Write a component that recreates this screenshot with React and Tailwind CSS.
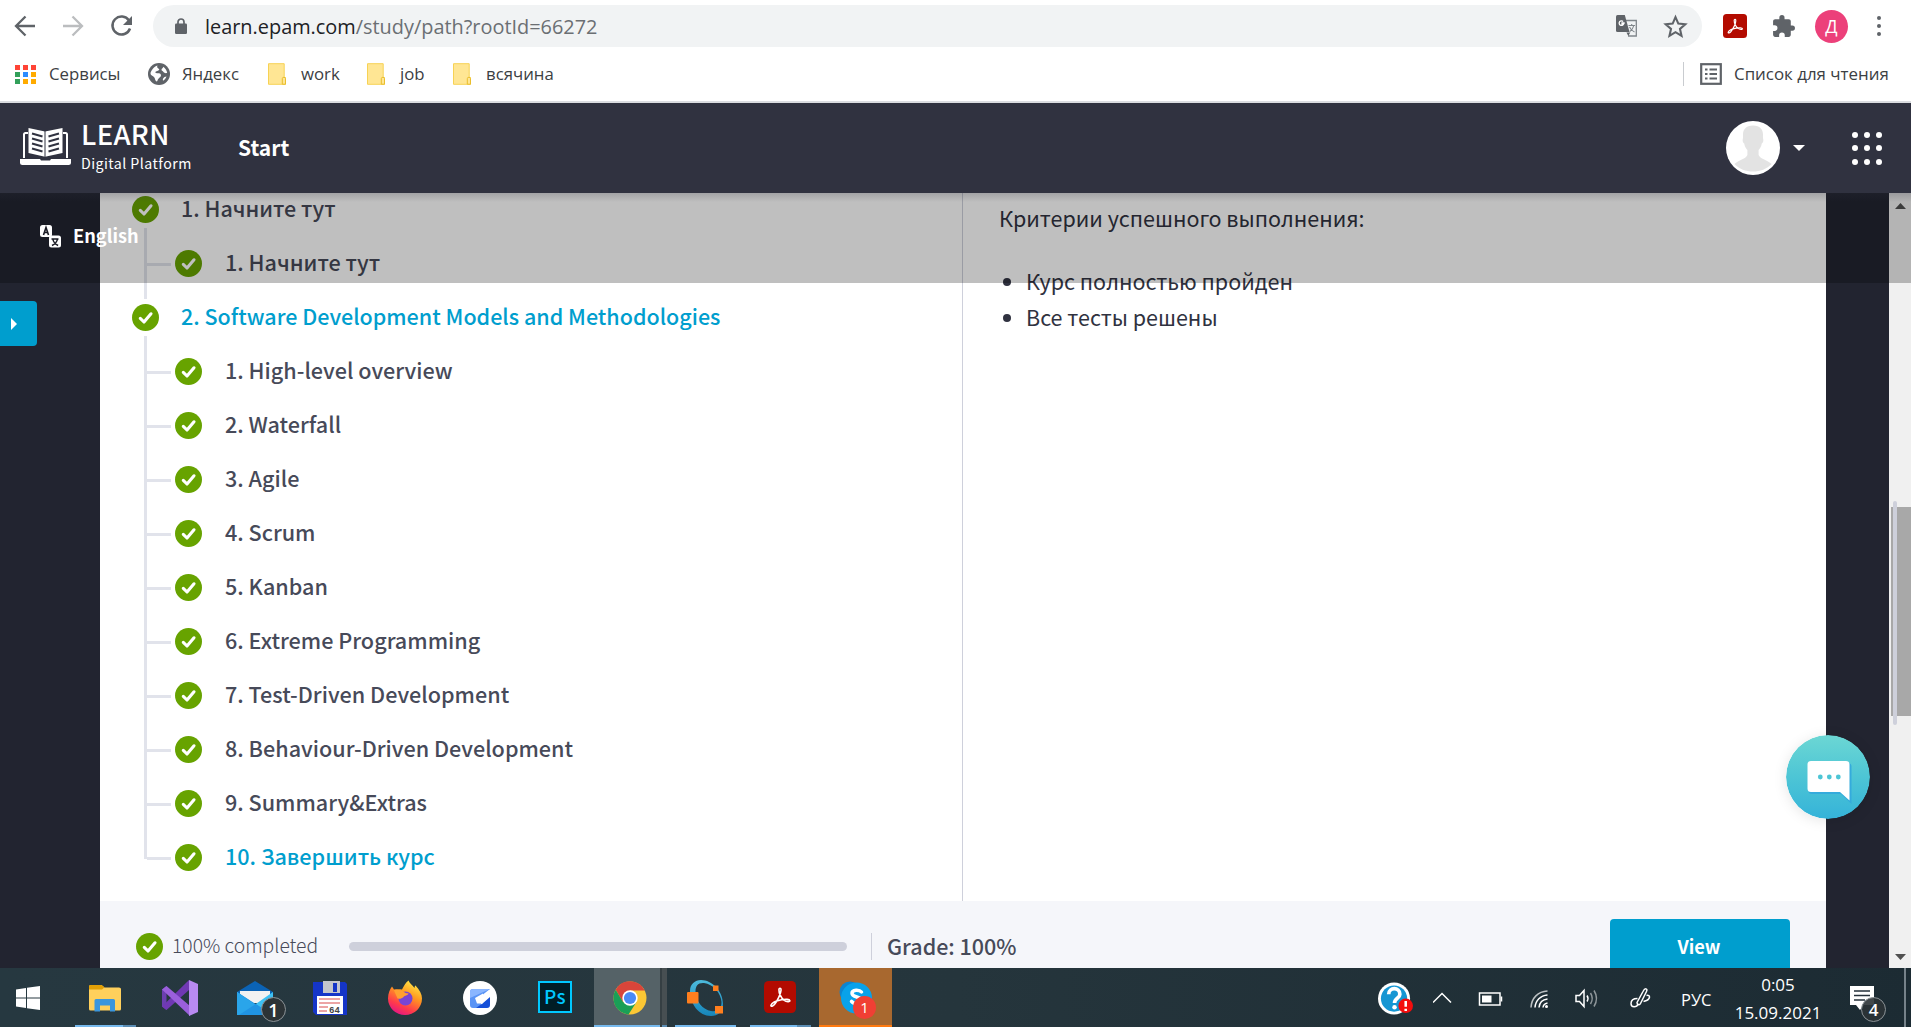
import React from 'react';

const CJK = "font-['Noto_Sans_CJK_SC',sans-serif]";
const OPEN = "font-['Open_Sans','Noto_Sans',sans-serif]";

function Check() {
  return (
    <svg viewBox="0 0 27 27" className="block h-[27px] w-[27px] shrink-0">
      <circle cx="13.5" cy="13.5" r="13.5" fill="#67a300" />
      <path d="M8.3 14.4l3.7 3.600 7-8.200" fill="none" stroke="#fff" strokeWidth="3.1" strokeLinecap="round" strokeLinejoin="round" />
    </svg>
  );
}

function Folder() {
  return (
    <svg viewBox="0 0 18 22" className="block h-[22px] w-[18px]">
      <path d="M.5.7h15.700v13.800h1.300v6.800H.5z" fill="#ffe694" stroke="#f7d254" />
      <path d="M14.300 21.200v-5.600q0-1.300 1.600-1.300t1.600 1.300v5.600z" fill="#ffe694" stroke="#e9bd2c" />
    </svg>
  );
}

function AcrobatMark({ className }) {
  return (
    <svg viewBox="0 0 24 24" className={className}>
      <rect width="24" height="24" rx="3.5" fill="#b30b00" />
      <path d="M5.200 18.200c.8-2 4.700-3.500 8-4.100 3-.6 6-.5 6.200.6.2 1.100-2.400 1-4.500-.4-2-1.400-3.800-5.300-3.700-7.700.1-1.700 1.700-1.500 1.600.2-.1 2.800-3 8.200-4.700 10.500-1.200 1.700-3.200 2.300-2.900.9z" fill="none" stroke="#fff" strokeWidth="1.200" strokeLinejoin="round" />
    </svg>
  );
}

function Toolbar() {
  return (
    <div className="flex h-[52px] items-center">
      <svg viewBox="0 0 153 52" className="block h-[52px] w-[153px] shrink-0" fill="none" strokeWidth="2.3">
        <path d="M35 26H17M25.500 16.500L16 26l9.500 9.500" stroke="#5f6368" />
        <path d="M63 26h18M72.500 16.500L82 26l-9.500 9.500" stroke="#bbbdbf" />
        <path d="M129 20.500A9 9 0 1 0 130 28.500" stroke="#5f6368" strokeWidth="2.500" />
        <path d="M132 16v9h-9z" fill="#5f6368" />
      </svg>
      <div className="flex h-[42px] w-[1549px] items-center rounded-full bg-[#f1f3f4] pl-[22px] pr-[14px]">
        <svg viewBox="0 0 12 16" className="h-[16px] w-[12px]">
          <rect y="5.500" width="12" height="10.500" rx="1.200" fill="#5f6368" />
          <path d="M3 6V4a3 3 0 0 1 6 0v2" fill="none" stroke="#5f6368" strokeWidth="1.700" />
        </svg>
        <div className="ml-[18px] mt-[2px] flex-1 whitespace-nowrap text-[19.900px] leading-none text-[#6b6f73]">
          <span className="text-[#202124]">learn.epam.com</span>/study/path?rootId=66272
        </div>
        <svg viewBox="0 0 22 22" className="h-[22px] w-[22px]">
          <path d="M9 5.500h11.300v15.500H12" fill="none" stroke="#80868b" strokeWidth="1.300" />
          <path d="M1.500 0h7.300l4.700 17H1.500Q0 17 0 15.500v-14Q0 0 1.500 0z" fill="#5f6368" />
          <path d="M10.500 17.500l1.800 3.500 2-3.500z" fill="#5f6368" />
          <path d="M8.700 8H6v1h1.600a2.300 2.300 0 1 1-.5-2.500" fill="none" stroke="#fff" strokeWidth="1.300" />
          <path d="M12.500 10.500h6.500M15.700 9v1.500M17.800 10.500c-.6 2.700-2 4.600-4 6M13.500 12c1 2 2.800 4 5 5" fill="none" stroke="#80868b" strokeWidth="1.100" />
        </svg>
        <svg viewBox="0 0 24 24" className="ml-[25px] h-[25px] w-[25px]">
          <path d="M12 3l2.700 6.200 6.700.6-5.100 4.500 1.500 6.600L12 17.400l-5.800 3.500 1.500-6.600-5.100-4.500 6.700-.6z" fill="none" stroke="#5f6368" strokeWidth="2" />
        </svg>
      </div>
      <AcrobatMark className="ml-[21px] h-[24px] w-[24px]" />
      <svg viewBox="0 0 24 24" className="ml-[24px] h-[25px] w-[25px]">
        <path fill="#5f6368" d="M20.500 11H19V7c0-1.100-.9-2-2-2h-4V3.500a2.500 2.500 0 0 0-5 0V5H4c-1.100 0-2 .9-2 2v3.800h1.500a2.700 2.700 0 0 1 0 5.400H2V20c0 1.100.9 2 2 2h3.800v-1.500a2.700 2.700 0 0 1 5.400 0V22H17c1.100 0 2-.9 2-2v-4h1.500a2.500 2.500 0 0 0 0-5z" />
      </svg>
      <div className="ml-[19px] flex h-[33px] w-[33px] items-center justify-center rounded-full bg-[#ec407a] text-[18px] leading-none text-white">Д</div>
      <div className="ml-[29px] flex flex-col gap-[4px]">
        {[0, 1, 2].map((i) => <i key={i} className="block h-[4px] w-[4px] rounded-full bg-[#5f6368]" />)}
      </div>
    </div>
  );
}

function Bookmarks() {
  const colors = ['bg-[#ff4436]', 'bg-[#ff4436]', 'bg-[#ff4436]', 'bg-[#32a05a]', 'bg-[#2b8cff]', 'bg-[#ffab00]', 'bg-[#32a05a]', 'bg-[#ffab00]', 'bg-[#ffab00]'];
  return (
    <div className="flex h-[49px] items-center whitespace-nowrap pb-[5px] pl-[15px] text-[16.800px] leading-none text-[#3c4043]">
      <div className="grid grid-cols-3 gap-x-[3px] gap-y-[2px]">
        {colors.map((c, i) => <i key={i} className={`block h-[5px] w-[5px] ${c}`} />)}
      </div>
      <span className="ml-[13px] w-[72px]">Сервисы</span>
      <svg viewBox="0 0 22 22" className="ml-[27px] h-[22px] w-[22px]">
        <circle cx="11" cy="11" r="11" fill="#5f6368" />
        <path d="M9.500 2.500c-1 2 .5 2.500 1.500 3.500s-1.500 2-3 2.500c-1.500.6-.5 1.800 1 1.800 2.500 0 4 .2 4 2s-2 2.500-3 4c-.6 1-.4 2.200-1.500 2.200-1.800-1-1-2.500-2.300-4.200S2.500 12.500 2.500 10.500 6 3 9.500 2.500zM15 3.800c2 1.200 3.800 3.500 4.200 6-1.200.7-3 .3-3.700-.8s-2.300-1.200-2-2.500S15.300 5.500 15 3.800zM18.500 13.500c-.6 1.600-2 3.400-3.500 4.200-.6-1.500.5-3 1.500-3.700z" fill="#fff" />
      </svg>
      <span className="ml-[12px] w-[60px]">Яндекс</span>
      <span className="ml-[26px]"><Folder /></span>
      <span className="ml-[15px] w-[40px]">work</span>
      <span className="ml-[26px]"><Folder /></span>
      <span className="ml-[15px] w-[26px]">job</span>
      <span className="ml-[27px]"><Folder /></span>
      <span className="ml-[15px]">всячина</span>
      <div className="ml-auto mr-[16px] h-[24px] w-px bg-[#c9ccd0]" />
      <svg viewBox="0 0 22 22" className="h-[22px] w-[22px]" fill="none" stroke="#5f6368">
        <rect x="1.200" y="1.200" width="19.600" height="19.600" strokeWidth="2.200" />
        <path d="M5 6.500h2.500M5 11h2.500M5 15.500h2.500M9.500 6.500H17M9.500 11H17M9.500 15.500H17" strokeWidth="2" />
      </svg>
      <span className="ml-[12px] mr-[22px] w-[155px] text-[16.900px]">Список для чтения</span>
    </div>
  );
}

function Header() {
  return (
    <div className={`flex h-[90px] items-center bg-[#303240] text-white ${CJK}`}>
      <svg viewBox="0 0 51 38" className="mb-[4px] ml-[20px] h-[38px] w-[51px]">
        <path d="M4 31V7.500q0-1.500 1.500-1.500H8M47 31V7.500Q47 6 45.500 6H43" fill="none" stroke="#fff" strokeWidth="2" />
        <path d="M0 32h20l1 1.500h9l1-1.500h20v3.500Q51 38 48.500 38h-46Q0 38 0 35.500z" fill="#fff" />
        <path d="M8.500 1L25 4.500 42.500 1v25L25 29.800 8.500 26z" fill="#fff" />
        <path d="M25 4v26" stroke="#303240" strokeWidth="1" />
        <path d="M12 6.500l10.500 3M12 11.500l10.500 3M12 16.500l10.500 3M12 21.500l10.500 3M39 6.500l-10.500 3M39 11.500l-10.500 3M39 16.500l-10.500 3M39 21.500l-10.500 3" stroke="#303240" strokeWidth="2" />
      </svg>
      <div className="mb-[5px] ml-[10px] flex w-[157px] flex-col whitespace-nowrap">
        <span className="h-[34px] text-[27.500px] font-medium leading-[29px] tracking-[0.3px]">LEARN</span>
        <span className="text-[14.200px] leading-[20px] tracking-[0.450px]">Digital Platform</span>
      </div>
      <span className="mb-[2px] text-[21px] font-bold leading-none">Start</span>
      <svg viewBox="0 0 54 54" className="ml-auto h-[54px] w-[54px]">
        <circle cx="27" cy="27" r="27" fill="#fff" />
        <path d="M27 4.500c7 0 10 4 10 9 0 2-.2 3.500.3 5 .3 2-.6 3.500-1.500 4-.5 3-1.700 4.800-3.200 6.500v5c1.500 4 8 4.500 12.900 9C41 48 34 50.500 27 50.500S13 48 8.500 43c5-4.500 11.400-5 12.900-9v-5c-1.500-1.700-2.700-3.500-3.200-6.500-.9-.5-1.800-2-1.500-4 .5-1.500.3-3 .3-5 0-5 3-9 10-9z" fill="#e3e3e3" />
      </svg>
      <svg viewBox="0 0 12 6" className="ml-[13px] h-[6px] w-[12px]"><path d="M0 0h12L6 6z" fill="#fff" /></svg>
      <div className="ml-[47px] mr-[29px] grid grid-cols-3 gap-x-[6px] gap-y-[7.500px]">
        {[...Array(9).keys()].map((i) => <i key={i} className="block h-[6px] w-[6px] rounded-full bg-white" />)}
      </div>
    </div>
  );
}

const modules = ['1. High-level overview', '2. Waterfall', '3. Agile', '4. Scrum', '5. Kanban', '6. Extreme Programming', '7. Test-Driven Development', '8. Behaviour-Driven Development', '9. Summary&Extras', '10. Завершить курс'];

function Section({ title, active }) {
  return (
    <div className={`flex h-[54px] items-center pl-[32px] ${active ? 'text-[#009ece]' : ''}`}>
      <Check />
      <span className="ml-[22px] mt-[-3px]">{title}</span>
    </div>
  );
}

function Module({ title, active, first, line }) {
  return (
    <div className={`flex h-[54px] items-center pl-[44px] text-[21.600px] ${active ? 'text-[#009ece]' : ''}`}>
      <div className={`flex w-[3px] flex-col self-stretch ${first ? 'mt-[-8px]' : ''} ${line === 'down' ? 'mb-[-9px]' : ''}`}>
        <div className={`w-[3px] bg-[#e1e3eb] ${line === 'end' ? 'h-[29px]' : 'grow'}`} />
      </div>
      <div className="mt-[2px] h-[3px] w-[24px] bg-[#e1e3eb]" />
      <div className="ml-[4px]"><Check /></div>
      <span className="ml-[23px] mt-[-3px]">{title}</span>
    </div>
  );
}

function Course() {
  return (
    <div className={`flex w-[1726px] flex-col bg-white text-[#474a59] ${CJK}`}>
      <div className="flex h-[708px]">
        <div className="w-[862px] overflow-hidden whitespace-nowrap text-[21.500px] font-medium leading-[32px]">
          <div className="mt-[-11px] flex flex-col">
            <Section title="1. Начните тут" />
            <Module title="1. Начните тут" first line="down" />
            <Section title="2. Software Development Models and Methodologies" active />
            {modules.map((m, i) => (
              <Module key={m} title={m} first={i === 0} line={i === 9 ? 'end' : 'through'} active={i === 9} />
            ))}
          </div>
        </div>
        <div className="w-px bg-[#ced0db]" />
        <div className="flex flex-col whitespace-nowrap pl-[36px] pt-[7px] text-[21.500px] leading-[36px] text-[#303240]">
          <p>Критерии успешного выполнения:</p>
          <ul className="mt-[27px] flex flex-col">
            {['Курс полностью пройден', 'Все тесты решены'].map((t) => (
              <li key={t} className="flex items-center">
                <i className="ml-[4px] mr-[15px] mt-[2px] block h-[8px] w-[8px] rounded-full bg-[#303240]" />
                {t}
              </li>
            ))}
          </ul>
        </div>
      </div>
      <div className="flex h-[67px] items-start bg-[#f5f6fa] pl-[36px] leading-[27px]">
        <div className="mt-[32px] flex items-center whitespace-nowrap">
          <Check />
          <span className="ml-[9px] mt-[-2px] w-[148px] text-[19.300px] font-light">100% completed</span>
          <div className="ml-[29px] h-[9px] w-[498px] rounded-full bg-[#ced0db]" />
          <div className="ml-[24px] h-[27px] w-px bg-[#ced0db]" />
          <span className="ml-[15px] mt-[-2px] text-[21.500px] font-medium">Grade: 100%</span>
        </div>
        <div className="ml-auto mr-[36px] mt-[18px] flex h-[49px] w-[180px] items-center justify-center rounded-t-[4px] bg-[#009ece] pr-[2px] pt-[6px] text-[18.200px] font-bold text-white">View</div>
      </div>
    </div>
  );
}

function Scrollbar() {
  return (
    <div className="relative flex w-[22px] flex-col items-center bg-[#f0f0f0]">
      <svg viewBox="0 0 11 6" className="mt-[10px] h-[6px] w-[11px]"><path d="M0 6h11L5.500 0z" fill="#505050" /></svg>
      <div className="mt-[298px] h-[209px] w-[20px] self-end bg-[#a8a8a8]" />
      <div className="absolute left-[4px] top-[308px] h-[224px] w-[4px] rounded-full bg-[#ced0db]" />
      <svg viewBox="0 0 11 6" className="mb-[8px] mt-auto h-[6px] w-[11px]"><path d="M0 0h11L5.500 6z" fill="#505050" /></svg>
    </div>
  );
}

function Page() {
  return (
    <div className="relative flex h-[775px] bg-[#222430]">
      <div className="w-[100px]" />
      <Course />
      <div className="w-[63px]" />
      <Scrollbar />
      <div className={`absolute left-0 top-0 flex h-[90px] w-[1911px] items-center bg-black/25 text-white ${CJK}`}>
        <svg viewBox="0 0 21 23" className="mb-[3px] ml-[40px] h-[23px] w-[21px]">
          <rect width="12" height="12" rx="2.500" fill="#fff" />
          <path d="M3.500 10L6 2.500 8.500 10M4.300 7.500h3.400" fill="none" stroke="#1a1b24" strokeWidth="1.600" />
          <rect x="9" y="10.500" width="12" height="12" rx="2.500" fill="#fff" />
          <path d="M11.500 14h7M17.500 14c-.5 3-2.500 5-5.500 6.500M12.800 14c.5 3 2.300 5 5.300 6.500" fill="none" stroke="#1a1b24" strokeWidth="1.500" />
        </svg>
        <span className="ml-[12px] mt-[-4px] text-[18.200px] font-bold">English</span>
      </div>
      <div className="absolute left-0 top-0 h-[9px] w-[1911px] bg-gradient-to-b from-[#303240]/20 to-transparent" />
      <div className="absolute left-0 top-[108px] flex h-[45px] w-[37px] items-center rounded-r-[4px] bg-[#009ece] pl-[11px]">
        <svg viewBox="0 0 6 12" className="h-[12px] w-[6px]"><path d="M0 0v12l6-6z" fill="#fff" /></svg>
      </div>
      <svg viewBox="0 0 84 84" className="absolute left-[1786px] top-[542px] h-[84px] w-[84px] rounded-full shadow-[0_2px_14px_rgba(0,0,0,0.1)]">
        <defs>
          <linearGradient id="chat" x2="0" y2="1"><stop stopColor="#6cd7d4" /><stop offset=".5" stopColor="#4dc5d5" /><stop offset="1" stopColor="#35b3d9" /></linearGradient>
        </defs>
        <circle cx="42" cy="42" r="42" fill="url(#chat)" />
        <path d="M26 28h36q3.500 0 3.500 3.500v37.500L55 59H26q-3.500 0-3.500-3.500v-24Q22.500 28 26 28z" fill="#35abdc" />
        <path d="M25 26h35q3.500 0 3.500 3.500V65.500L54 57H25q-3.500 0-3.500-3.500v-24Q21.500 26 25 26z" fill="#fff" />
        <g fill="#4dc5d5"><circle cx="34.300" cy="42" r="2.400" /><circle cx="43.300" cy="42" r="2.400" /><circle cx="52.300" cy="42" r="2.400" /></g>
      </svg>
    </div>
  );
}

function Slot({ children, className }) {
  return <div className={`flex shrink-0 flex-col items-center ${className}`}>{children}</div>;
}

function Underline({ main, rest }) {
  return (
    <div className="mt-auto flex h-[2px]">
      <i className={`block bg-[#76b9ed] ${main}`} />
      <i className={`block bg-[#5b8db4] ${rest}`} />
    </div>
  );
}

function Taskbar() {
  return (
    <div className="flex h-[59px] bg-gradient-to-r from-[#263840] via-[#25353c] to-[#1c2b33] text-white">
      <Slot className="w-[56px]">
        <svg viewBox="0 0 24 24" className="mt-[18px] h-[24px] w-[24px]"><path d="M0 3.400L10 2v9.500H0zM11 1.800L24 0v11.500H11zM0 12.500h10V22L0 20.600zM11 12.500h13V24l-13-1.800z" fill="#fff" /></svg>
      </Slot>
      <Slot className="ml-[18px] w-[62px]">
        <svg viewBox="0 0 32 27" className="mt-[17px] h-[27px] w-[32px]">
          <path d="M0 1.500Q0 0 1.500 0h11l3 2.500H30Q32 2.500 32 4v20q0 1.500-1.500 1.500h-29Q0 25.500 0 24z" fill="#ffd05c" />
          <path d="M0 1.500Q0 0 1.500 0h11l3 2.300L13 4.500H0z" fill="#e2a006" />
          <path d="M5.500 26.500v-11q0-1.500 1.500-1.500h17.500q1.500 0 1.500 1.500v11h-5v-6H11v6z" fill="#3b96dc" />
        </svg>
        <Underline main="w-[48px]" rest="w-[13px]" />
      </Slot>
      <Slot className="ml-[14px] w-[60px]">
        <svg viewBox="0 0 36 36" className="mt-[12px] h-[36px] w-[36px]">
          <path d="M0 9.500L4.500 6v24L0 26.500z" fill="#6b3fb0" />
          <path d="M0 26.500L27 0v10L4.500 30z" fill="#7038b4" />
          <path d="M0 9.500L4.500 6 28 26v10L0 9.500z" fill="#9a5fdc" />
          <path d="M27 0l9 4v28l-9 4z" fill="#b98af2" />
        </svg>
      </Slot>
      <Slot className="relative ml-[15px] w-[60px]">
        <svg viewBox="0 0 36 34" className="mt-[13px] h-[34px] w-[36px]">
          <path d="M0 11L18 0l18 11v3H0z" fill="#0b63b5" />
          <path d="M3 10h30v12H3z" fill="#f2f2f2" />
          <path d="M0 11l18 12.500L36 11v23H0z" fill="#3cc0f3" />
          <path d="M0 11l36 23H0z" fill="#2094e3" />
          <path d="M0 11l18 12.500L2 34H0z" fill="#2aa5ea" />
        </svg>
        <span className={`absolute left-[36px] top-[29px] flex h-[25px] w-[25px] items-center justify-center rounded-full border border-[#8b9296] bg-[#2c3336] text-[18px] font-semibold leading-none ${OPEN}`}>1</span>
      </Slot>
      <Slot className="ml-[15px] w-[60px]">
        <svg viewBox="0 0 34 34" className="mt-[13px] h-[34px] w-[34px]">
          <path d="M1 1h31l2 2v31H3l-3-3V1z" fill="#1535c8" />
          <rect x="10" y="0" width="17" height="12" fill="#c4c6cc" /><rect x="20" y="2" width="4" height="9" fill="#1535c8" />
          <rect x="4" y="15" width="26" height="18" fill="#fff" />
          <path d="M6 18h21M6 22h21M6 26h9M6 30h8" stroke="#d94b4b" strokeWidth="1" />
          <text x="16" y="31.500" fontSize="9" fontWeight="700" fill="#444" fontFamily="Liberation Mono">64</text>
        </svg>
      </Slot>
      <Slot className="ml-[14px] w-[62px]">
        <svg viewBox="0 0 34 34" className="mt-[12px] h-[35px] w-[34px]">
          <defs><linearGradient id="fox" x1=".8" y1="0" x2=".3" y2="1"><stop stopColor="#fff04a" /><stop offset=".4" stopColor="#ff9a1f" /><stop offset=".75" stopColor="#ff3b4a" /><stop offset="1" stopColor="#e31587" /></linearGradient></defs>
          <path d="M20.500 0c1 3 4 4.500 6 7.500 0-2 1-2.500 1-2.500 4 4.500 6.500 8.500 6.500 13A17 16.500 0 0 1 0 18C0 12.500 2 8.500 4 6l2 3c3-.5 6-.5 8 0 2-3.500 3-6.500 6.500-9z" fill="url(#fox)" />
          <circle cx="17.500" cy="18" r="7" fill="#7745d3" />
          <path d="M6 9.500c4-.5 8 0 10 2 1.500 1.500 3 1 4.500 1.500-.5 2-4 2-5 3.500-2 2.500-6 1.500-6 1.500-1-3-2.500-5-3.500-8.500z" fill="#ffa030" />
        </svg>
      </Slot>
      <Slot className="ml-[13px] w-[62px]">
        <svg viewBox="0 0 34 34" className="mt-[13px] h-[34px] w-[34px]">
          <circle cx="17" cy="17" r="17" fill="#fff" />
          <path d="M7 11q0-3 3-3h17l-9 7v12h-8q-3 0-3-3z" fill="#5a94f5" />
          <path d="M27 8L7 17V11q0-3 3-3z" fill="#8ab6ff" />
          <path d="M27 16v8q0 3-3 3H13l7-5v-6z" fill="#1650d8" />
          <path d="M12 17l8-4.500V16h7l-7.500 6.500H14z" fill="#fff" />
        </svg>
      </Slot>
      <Slot className="ml-[13px] w-[62px]">
        <div className={`mt-[13px] flex h-[32px] w-[34px] items-center justify-center border-2 border-[#00c8ff] bg-[#001d26] pb-[3px] text-[19px] font-medium leading-none tracking-[0.5px] text-[#00c8ff] ${CJK}`}>Ps</div>
      </Slot>
      <div className="ml-[8px] flex w-[73px] bg-[#556267]">
        <div className="flex w-[66px] flex-col items-center">
          <svg viewBox="0 0 34 34" className="ml-[6px] mt-[13px] h-[34px] w-[34px]">
            <circle cx="17" cy="17" r="16.500" fill="#fbc734" />
            <path d="M2.700 8.700A16.500 16.500 0 0 1 31.800 9.500H17L10 21z" fill="#d9453a" />
            <path d="M2.700 8.700A16.500 16.500 0 0 0 15.500 33.500L23.500 21 17 24 10 21z" fill="#1a9f57" />
            <circle cx="17" cy="17" r="7.700" fill="#fff" /><circle cx="17" cy="17" r="6.100" fill="#4a8af5" />
          </svg>
          <i className="mt-auto block h-[2px] w-[66px] bg-[#76b9ed]" />
        </div>
        <div className="flex w-[7px] border-l-2 border-[#353f43] bg-[#474f52]"><i className="mt-auto block h-[2px] w-full bg-[#5b8db4]" /></div>
      </div>
      <Slot className="ml-[7px] w-[62px]">
        <svg viewBox="0 0 36 36" className="mt-[12px] h-[36px] w-[36px]">
          <defs><linearGradient id="ring" x2="0" y2="1"><stop stopColor="#4dbbdc" /><stop offset="1" stopColor="#1685ba" /></linearGradient></defs>
          <path fillRule="evenodd" d="M14 0C25 0 36 11 36 24 36 32 31 36 24 36 12 36 3 24 3 11 3 4 8 0 14 0zM17 3C11 2.500 8.500 6 8.500 11.500 8.500 21 16 30 24 31 31 32 34.500 29 34.500 22 34 13 26 4 17 3z" fill="url(#ring)" />
          <g fill="#ff7f1e"><rect y="12" width="11.500" height="11.500" rx="1" /><rect x="26" y="5.500" width="5.500" height="5.500" /><rect x="28" y="26" width="8" height="7.500" /></g>
        </svg>
        <Underline main="w-[61px]" rest="w-0" />
      </Slot>
      <Slot className="ml-[13px] w-[62px]">
        <AcrobatMark className="mt-[13px] h-[32px] w-[32px]" />
        <Underline main="w-[47px]" rest="w-[14px]" />
      </Slot>
      <div className="relative ml-[8px] flex w-[73px] flex-col items-center border-b-2 border-[#ff7a10] bg-[#a8682f]">
        <svg viewBox="0 0 34 34" className="mt-[13px] h-[34px] w-[34px]">
          <circle cx="11" cy="11" r="10.500" fill="#0d84cf" /><circle cx="23" cy="22" r="10.500" fill="#0a6cd0" /><circle cx="17.500" cy="17" r="15.500" fill="#08a2ea" />
          <path d="M22.500 11c-2-2.500-9.500-2.800-9.500 1.300 0 4.700 9.500 2.700 9.500 7.200 0 4-7.500 4-10 .8" fill="none" stroke="#fff" strokeWidth="3.500" strokeLinecap="round" />
        </svg>
        <span className={`absolute left-[34px] top-[28px] flex h-[23px] w-[23px] items-center justify-center rounded-full bg-[#f03f34] text-[15px] leading-none ${OPEN}`}>1</span>
      </div>
      <svg viewBox="0 0 36 36" className="ml-auto mt-[14px] h-[35px] w-[35px]">
        <circle cx="16.500" cy="17" r="16.500" fill="#fff" /><circle cx="16.500" cy="17" r="13.500" fill="#1596d3" />
        <path d="M11 12.500c0-7.500 11.500-7.500 11.500 0 0 4.500-5.500 4-5.500 9" fill="none" stroke="#fff" strokeWidth="3.800" /><circle cx="17" cy="26" r="2.300" fill="#fff" />
        <circle cx="28.500" cy="24.500" r="7.500" fill="#f40d0d" /><path d="M28.500 19.500v6M28.500 27.500v2.300" stroke="#fff" strokeWidth="2.600" />
      </svg>
      <svg viewBox="0 0 230 59" className="ml-[20px] mr-[19px] h-[59px] w-[230px] shrink-0" fill="none" stroke="#fff" strokeWidth="1.500">
        <path d="M0 34.500l9-9 9 9" />
        <rect x="46.500" y="25" width="20.500" height="12" /><path d="M68.500 28.500v5" /><rect x="49" y="27.500" width="9.500" height="7" fill="#fff" stroke="none" />
        <g transform="translate(97 22)"><path d="M1 17.500C1.500 8 8 1.500 17.500 1" opacity=".7" /><path d="M5 17.500C5.500 10.500 10.500 5.500 17.500 5M9 17.500c.5-5 4-8 8.500-8.500M13 17.500c.3-2.500 2-4 4.500-4.500" /><circle cx="16.500" cy="16.500" r="1.500" fill="#fff" stroke="none" /></g>
        <path d="M143 27.500h3.500l4.500-5v16l-4.500-5H143z" /><path d="M154 27.500q2 3 0 6" /><path d="M157.500 25q3.500 5.500 0 11M161 22.500q5 8 0 16" opacity=".5" />
        <path d="M204 34.500l6-11c2-4 5-3 3.500 0l-6 12c-1.200 2.200-3.500 1-3.500-1zM204.500 30.500c-4 0-6.500 2-6.500 5 0 4.500 6 4 7 .5M213.500 27.500c4-1 4 3 0 5l-3 1" />
      </svg>
      <span className={`ml-[-1px] mt-[22px] w-[54px] text-[16.500px] leading-[20px] ${OPEN}`}>РУС</span>
      <div className={`flex w-[86px] flex-col items-center whitespace-nowrap pt-[3px] text-[17px] leading-[28px] ${OPEN}`}>
        <span>0:05</span><span>15.09.2021</span>
      </div>
      <div className="relative ml-[29px] w-[54px]">
        <svg viewBox="0 0 24 24" className="mt-[18px] h-[24px] w-[24px]"><path d="M0 0h24v19H14l-4 5-4-5H0z" fill="#fff" /><path d="M4 5h16M4 9.500h16M4 14h11" stroke="#25303a" strokeWidth="1.500" /></svg>
        <span className={`absolute left-[11px] top-[29px] flex h-[25px] w-[25px] items-center justify-center rounded-full border border-[#8b9296] bg-[#2c3336]/90 text-[17px] font-semibold leading-none ${OPEN}`}>4</span>
      </div>
      <div className="mr-[5px] w-[2px] bg-[#76828a]" />
    </div>
  );
}

export default function App() {
  return (
    <div className="flex h-[1027px] w-[1911px] flex-col overflow-hidden bg-white">
      <div className={`flex h-[103px] flex-col border-b-2 border-[#dadce0] ${OPEN}`}>
        <Toolbar />
        <Bookmarks />
      </div>
      <Header />
      <Page />
      <Taskbar />
    </div>
  );
}
